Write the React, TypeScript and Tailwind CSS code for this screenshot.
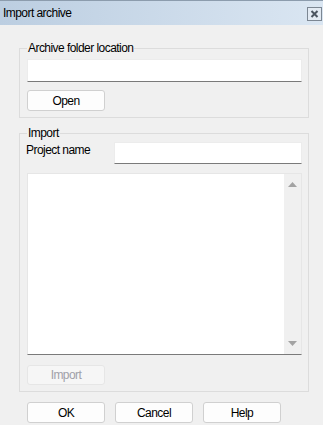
import React from "react";

function Btn({ children, disabled }: { children: React.ReactNode; disabled?: boolean }) {
  return (
    <button
      className={
        disabled
          ? "w-[78px] h-[20px] rounded-[3px] border border-[#e6e6e6] bg-[#f6f6f6] text-[#a0a0a8] flex items-center justify-center leading-none"
          : "w-[78px] h-[21px] rounded-[3px] border border-[#d0d0d0] bg-[#fdfdfd] text-black flex items-center justify-center leading-none"
      }
    >
      {children}
    </button>
  );
}

export default function App() {
  return (
    <div className="w-[323px] h-[425px] bg-[#f0f0f0] flex flex-col text-[12px] tracking-[-0.55px] text-black font-['Liberation_Sans',Arial,sans-serif] overflow-hidden">
      {/* title bar */}
      <div className="h-[25px] shrink-0 border-t border-[#8c9cad] bg-gradient-to-r from-[#bccee1] to-[#dae6f2] flex items-center justify-between pl-[3px] pr-[1px]">
        <span className="leading-none">Import archive</span>
        <div className="w-[15px] h-[14px] mt-[1px] border border-[#7c8793] bg-[#e2eaf3] flex items-center justify-center">
          <svg width="9" height="8" viewBox="0 0 9 8">
            <path d="M1.5 1 L7.5 7 M7.5 1 L1.5 7" stroke="#4a5460" strokeWidth="2" />
          </svg>
        </div>
      </div>

      {/* body */}
      <div className="flex flex-col pl-[19px] pr-[14px]">
        <fieldset className="mt-[16px] border border-[#dcdcdc] pl-[7px] pr-[6px] pb-[6px] flex flex-col">
          <legend className="px-[1px] leading-[14px]">Archive folder location</legend>
          <div className="mt-[4px] h-[23px] bg-white border border-[#ececec] border-b-[#7a7a7a]" />
          <div className="mt-[8px]">
            <Btn>Open</Btn>
          </div>
        </fieldset>

        <fieldset className="mt-[8px] border border-[#dcdcdc] pl-[7px] pr-[6px] pb-[6px] flex flex-col">
          <legend className="px-[1px] leading-[14px]">Import</legend>
          <div className="mt-[2px] flex items-start">
            <span className="w-[88px] -ml-[1px] pt-[1px] leading-[14px]">Project name</span>
            <div className="flex-1 h-[22px] bg-white border border-[#ececec] border-b-[#7a7a7a]" />
          </div>
          <div className="mt-[9px] h-[182px] bg-white border border-[#e6e6e6] border-b-[#7a7a7a] flex">
            <div className="flex-1" />
            <div className="w-[17px] bg-[#f0f0f0] flex flex-col items-center justify-between pt-[8px] pb-[8px]">
              <svg width="9" height="5" viewBox="0 0 9 5">
                <path d="M4.5 0 L9 5 L0 5 Z" fill="#a3a3a3" />
              </svg>
              <svg width="9" height="5" viewBox="0 0 9 5">
                <path d="M0 0 L9 0 L4.5 5 Z" fill="#a3a3a3" />
              </svg>
            </div>
          </div>
          <div className="mt-[10px]">
            <Btn disabled>Import</Btn>
          </div>
        </fieldset>

        <div className="mt-[10px] ml-[8px] flex gap-[10px]">
          <Btn>OK</Btn>
          <Btn>Cancel</Btn>
          <Btn>Help</Btn>
        </div>
      </div>
    </div>
  );
}
